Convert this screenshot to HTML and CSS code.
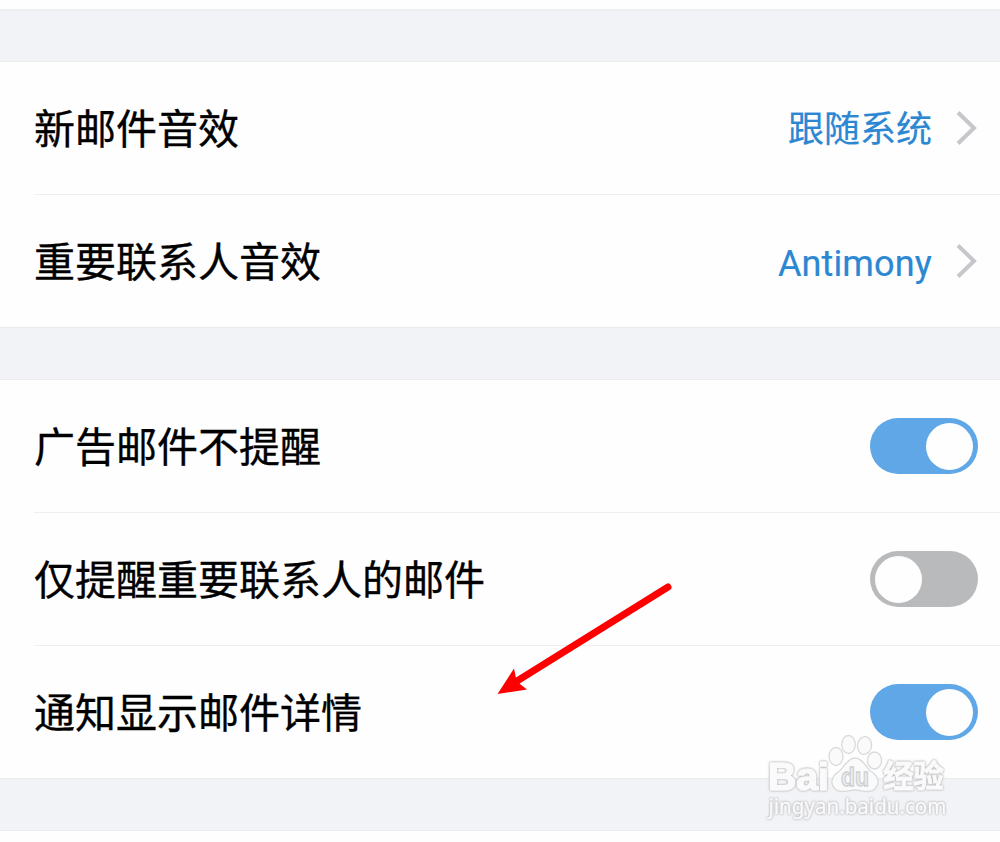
FILE: index.html
```html
<!DOCTYPE html>
<html lang="zh-CN">
<head>
<meta charset="utf-8">
<title>邮件提醒设置</title>
<link rel="stylesheet" href="styles.css">
</head>
<body>
<main class="screen">
  <div class="gap gap-top"></div>
  <section class="group">
    <div class="row">
      <span class="label">新邮件音效</span>
      <span class="value">跟随系统</span>
      <svg class="chevron" width="22" height="36" viewBox="0 0 22 36"><path d="M2 2.500 18 18 2 33.500"/></svg>
    </div>
    <div class="row">
      <span class="label">重要联系人音效</span>
      <span class="value value-latin">Antimony</span>
      <svg class="chevron" width="22" height="36" viewBox="0 0 22 36"><path d="M2 2.500 18 18 2 33.500"/></svg>
    </div>
  </section>
  <div class="gap"></div>
  <section class="group">
    <div class="row">
      <span class="label">广告邮件不提醒</span>
      <span class="toggle on"><span class="knob"></span></span>
    </div>
    <div class="row">
      <span class="label">仅提醒重要联系人的邮件</span>
      <span class="toggle"><span class="knob"></span></span>
    </div>
    <div class="row">
      <span class="label">通知显示邮件详情</span>
      <span class="toggle on"><span class="knob"></span></span>
    </div>
  </section>
  <div class="gap"></div>
  <svg class="arrow" width="190" height="130" viewBox="0 0 190 130">
    <path class="shaft" d="M178 17 27 111"/>
    <path class="head" d="M7.500 124 24 98.500 26 108 30 114 37 119.500Z"/>
  </svg>
  <svg class="watermark" width="200" height="100" viewBox="0 0 200 100">
    <g class="paw">
      <ellipse cx="76" cy="26.500" rx="7" ry="9"/>
      <ellipse cx="88.500" cy="14.500" rx="6.800" ry="9"/>
      <ellipse cx="104.500" cy="15.500" rx="7" ry="9" transform="rotate(8 104.500 15.500)"/>
      <ellipse cx="114.500" cy="30.500" rx="7" ry="8.500"/>
      <path d="M95 28C87 28 84 38 78 42C71 47 70 54 75 59C81 64 88 60 95 60C102 60 109 64 115 59C120 54 119 47 112 42C106 38 103 28 95 28Z"/>
      <text class="du" x="81" y="56" textLength="28" lengthAdjust="spacingAndGlyphs">du</text>
    </g>
    <g class="lettering">
      <text class="brand" x="8" y="59.500" textLength="61" lengthAdjust="spacingAndGlyphs">Bai</text>
      <text class="cn" x="123" y="57" textLength="61">经验</text>
      <text class="url" x="8.500" y="83.500" textLength="178" lengthAdjust="spacingAndGlyphs">jingyan.baidu.com</text>
    </g>
  </svg>
</main>
</body>
</html>
```
FILE: styles.css
```css
* { box-sizing: border-box; }
body { margin: 0; background: #fefefe; font-family: Roboto, "Noto Sans CJK SC", sans-serif; color: #000; }
.screen { position: relative; width: 1000px; height: 842px; padding-top: 9px; overflow: hidden; }
.gap { height: 53px; background: #f2f3f7; border-top: 1px solid #e9eaec; border-bottom: 1px solid #ececef; }
.gap-top { border-top: 2px solid #efeff1; }
.group { display: flex; flex-direction: column; height: 265px; padding-left: 34px; }
.group ~ .group { height: 398px; }
.row { display: flex; align-items: center; flex: 1; padding: 0 22.5px 0 0; }
.row + .row { border-top: 1px solid #efeff0; }
.label { flex: 1; padding-bottom: 4px; font: 400 41px/60px "Noto Sans CJK SC", sans-serif; white-space: nowrap; -webkit-text-stroke: 0.35px #000; }
.value { padding-bottom: 4px; color: #2c87d3; font: 400 36px/52px "Noto Sans CJK SC", sans-serif; -webkit-text-stroke: 0.2px #2c87d3; }
.value-latin { padding: 5px 0 0; font-family: Roboto, sans-serif; letter-spacing: 0.15px; }
.chevron { margin-left: 23.5px; fill: none; stroke: #c7c7cb; stroke-width: 4; }
.toggle { display: flex; align-items: center; width: 108px; height: 56px; padding: 0 5px; border-radius: 28px; background: #b8babc; }
.toggle.on { justify-content: flex-end; background: #5fa7e6; }
.knob { width: 47px; height: 47px; border-radius: 50%; background: #fefefe; }
.arrow { position: absolute; left: 490px; top: 570px; }
.shaft { fill: none; stroke: #f00; stroke-width: 7; stroke-linecap: round; }
.head { fill: #f00; }
.watermark { position: absolute; left: 760px; top: 730px; }
.paw { fill: #fafafb; stroke: #d9dadb; stroke-width: 1.3; }
.lettering { fill: #fafafb; stroke: #fafafb; stroke-width: 0.8; stroke-linejoin: round; filter: drop-shadow(0 0 0.8px #aeafb2) drop-shadow(0 0 0.5px #d6d7d9); }
.brand { font: 700 39px "Liberation Sans", sans-serif; stroke-width: 1.6; }
.du { font: 700 25px "Liberation Sans", sans-serif; fill: #ececee; stroke: #cfd0d2; }
.cn { font: 700 31px "Noto Sans CJK SC", sans-serif; }
.url { font: 400 21px "Noto Sans", sans-serif; stroke-width: 0.4; }
```
